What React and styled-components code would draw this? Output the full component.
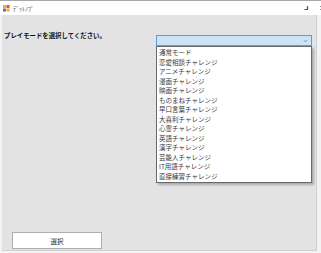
import styled, { createGlobalStyle } from 'styled-components';

const GlobalStyle = createGlobalStyle`
    html, body {
        margin: 0;
        padding: 0;
        background: #f3f3f3;
        font-family: "Noto Sans CJK JP", "Noto Sans", sans-serif;
    }
`;

const modes = [
    '通常モード',
    '恋愛相談チャレンジ',
    'アニメチャレンジ',
    '漫画チャレンジ',
    '映画チャレンジ',
    'ものまねチャレンジ',
    '早口言葉チャレンジ',
    '大喜利チャレンジ',
    '心霊チャレンジ',
    '英語チャレンジ',
    '漢字チャレンジ',
    '芸能人チャレンジ',
    'IT用語チャレンジ',
    '直接練習チャレンジ',
];

const App = () => {
    return (
        <Window>
            <GlobalStyle />
            <TitleBar>
                <AppIcon viewBox="0 0 7 7">
                    <rect x="0" y="0" width="3" height="3" fill="#f2b01e" />
                    <rect x="3.5" y="0" width="3" height="3" fill="#e64b3c" />
                    <rect x="0" y="3.5" width="3" height="3" fill="#3a7bd5" />
                    <rect x="3.5" y="3.5" width="3" height="3" fill="#f2b01e" />
                </AppIcon>
                <Title>ﾃﾞｯﾄﾉﾌﾞ</Title>
                <Controls>
                    <Glyph viewBox="0 0 6 6">
                        <path d="M4.5 1 V4.5 H1.5" stroke="#555" strokeWidth="1.2" fill="none" />
                    </Glyph>
                    <Glyph viewBox="0 0 6 6">
                        <path d="M1 1 L5 5 M5 1 L1 5" stroke="#777" strokeWidth="0.8" fill="none" />
                    </Glyph>
                </Controls>
            </TitleBar>
            <Client>
                <Row>
                    <Label>プレイモードを選択してください。</Label>
                    <Combo>
                        <ComboBox>
                            <Arrow viewBox="0 0 6 4">
                                <path d="M1 1 L3 3 L5 1" stroke="#4a6a8a" strokeWidth="0.8" fill="none" />
                            </Arrow>
                        </ComboBox>
                        <List>
                            {modes.map((m) => (
                                <Item key={m}>{m}</Item>
                            ))}
                        </List>
                    </Combo>
                </Row>
                <SelectButton>選択</SelectButton>
            </Client>
        </Window>
    );
};

const Window = styled.div`
    display: flex;
    flex-direction: column;
    width: 321px;
    height: 253px;
    box-sizing: border-box;
    border-top: 1px solid #a8a8a8;
    overflow: hidden;
`;

const TitleBar = styled.div`
    display: flex;
    align-items: center;
    height: 14px;
    padding-left: 3px;
    background: #ffffff;
`;

const AppIcon = styled.svg`
    width: 7px;
    height: 7px;
`;

const Title = styled.span`
    margin-left: 3px;
    font-size: 6px;
    color: #444;
`;

const Controls = styled.div`
    display: flex;
    align-items: center;
    gap: 10px;
    margin-left: auto;
    margin-right: -4px;
`;

const Glyph = styled.svg`
    width: 6px;
    height: 6px;
`;

const Client = styled.div`
    flex: 1;
    display: flex;
    flex-direction: column;
    justify-content: space-between;
    margin: 0 4px 2px 2px;
    padding: 16px 4px 1px 2px;
    background: #e3e3e3;
    border-right: 1px solid #d0d0d0;
    border-bottom: 1px solid #d0d0d0;
`;

const Row = styled.div`
    display: flex;
    justify-content: space-between;
    align-items: flex-start;
`;

const Label = styled.span`
    font-size: 6.4px;
    line-height: 9px;
    font-weight: bold;
    color: #111;
`;

const Combo = styled.div`
    position: relative;
    width: 156px;
    margin-top: 4px;
`;

const ComboBox = styled.div`
    display: flex;
    align-items: center;
    justify-content: flex-end;
    height: 11px;
    box-sizing: border-box;
    padding-right: 3px;
    background: #cce4f7;
    border: 1px solid #5aa0e0;
`;

const Arrow = styled.svg`
    width: 5px;
    height: 4px;
`;

const List = styled.div`
    position: absolute;
    top: 11px;
    left: 0;
    width: 156px;
    height: 137px;
    box-sizing: border-box;
    padding: 1px 0 0 2px;
    background: #ffffff;
    border: 1px solid #6a6a6a;
    box-shadow: 2px 2px 2px rgba(0, 0, 0, 0.25);
`;

const Item = styled.div`
    font-size: 6.5px;
    line-height: 9.5px;
    color: #3a3a3a;
    white-space: nowrap;
`;

const SelectButton = styled.button`
    width: 90px;
    height: 17px;
    margin-left: 8px;
    padding: 0;
    background: #ffffff;
    border: 1px solid #adadad;
    font-family: inherit;
    font-size: 6.5px;
    color: #222;
`;

export default App;
